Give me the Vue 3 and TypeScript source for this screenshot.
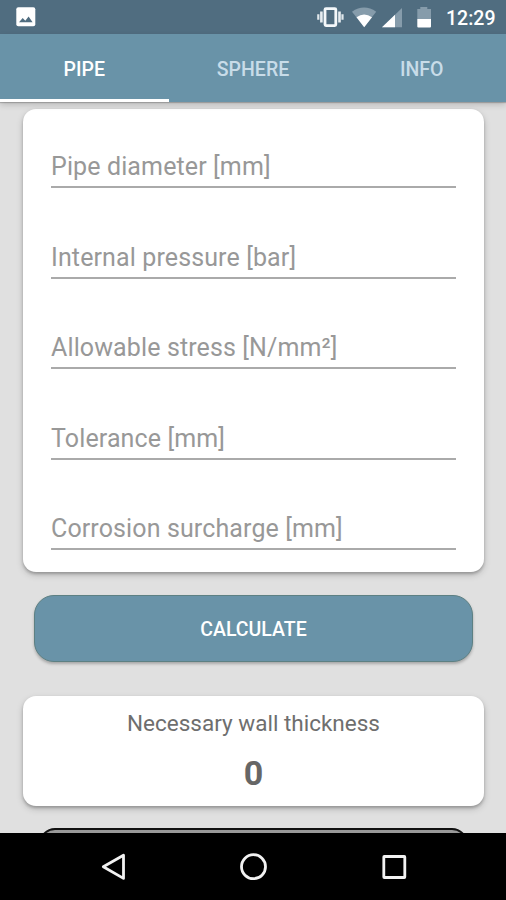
<script setup lang="ts">
import { ref } from 'vue'

interface Field {
  id: string
  label: string
}

const tabs: string[] = ['PIPE', 'SPHERE', 'INFO']
const activeTab = ref<string>('PIPE')

const fields: Field[] = [
  { id: 'diameter', label: 'Pipe diameter [mm]' },
  { id: 'pressure', label: 'Internal pressure [bar]' },
  { id: 'stress', label: 'Allowable stress [N/mm²]' },
  { id: 'tolerance', label: 'Tolerance [mm]' },
  { id: 'corrosion', label: 'Corrosion surcharge [mm]' },
]

const thickness = ref<number>(0)
</script>

<template>
  <div class="screen">
    <header class="status-bar">
      <svg class="picture-icon" width="20" height="20" viewBox="0 0 20 20">
        <rect x="0.3" y="0.2" width="19" height="19" rx="2" fill="#fff" />
        <path d="M3 15.3 6.7 11l2.6 2.7 3.300-4.300 4 5.900z" fill="#506d80" />
      </svg>
      <div class="status-icons">
        <svg width="130" height="34" viewBox="310 0 130 34">
          <rect x="325" y="8.600" width="10.800" height="17" rx="1" fill="none" stroke="#f4f8fa" stroke-width="2.800" />
          <path d="M321.400 11.500v11M339.500 11.500v11" stroke="#e6edf1" stroke-width="2.600" />
          <path d="M318.300 14.300v5.400M342.500 14.300v5.400" stroke="#e0e8ec" stroke-width="2.200" />
          <path d="M352 11.700Q364 3.300 376.200 11.700L364.200 27z" fill="#869cab" />
          <path d="M356.500 17.300Q364 11.700 372 17.300L364.200 27.200z" fill="#fff" />
          <path d="M402 8V27.300H382z" fill="#869cab" />
          <path d="M395 14.800V27.300H382z" fill="#fff" />
          <path d="M417.300 9h3V7h7v2h3.700v10h-13.700z" fill="#869cab" />
          <path d="M417.300 19H431v7.400q0 1-1 1h-11.700q-1 0-1-1z" fill="#fff" />
        </svg>
        <span class="clock">12:29</span>
      </div>
    </header>

    <nav class="tabs">
      <button
        v-for="tab in tabs"
        :key="tab"
        class="tab"
        :class="{ active: tab === activeTab }"
        @click="activeTab = tab"
      >
        {{ tab }}
      </button>
    </nav>

    <main class="content">
      <section class="card form">
        <div v-for="field in fields" :key="field.id" class="field">
          <span class="label">{{ field.label }}</span>
        </div>
      </section>

      <button class="calculate">CALCULATE</button>

      <section class="card result">
        <p class="caption">Necessary wall thickness</p>
        <p class="value">{{ thickness }}</p>
      </section>

      <div class="next-panel"></div>
    </main>

    <footer class="navigation">
      <svg width="506" height="67" viewBox="0 833 506 67" fill="none" stroke="#f2f2f2" stroke-width="2.800">
        <path d="M123.500 855.200V878.400L103.300 866.800z" stroke-linejoin="round" />
        <circle cx="253.500" cy="866.700" r="12" />
        <rect x="383.800" y="856.500" width="21" height="21" rx="0.500" />
      </svg>
    </footer>
  </div>
</template>

<style>
body {
  margin: 0;
}
</style>

<style scoped>
.screen {
  display: flex;
  flex-direction: column;
  width: 506px;
  height: 900px;
  overflow: hidden;
  background: #e0e0e0;
  font-family: Roboto, 'Liberation Sans', sans-serif;
}

.status-bar {
  display: flex;
  flex: none;
  align-items: center;
  justify-content: space-between;
  box-sizing: border-box;
  height: 34px;
  padding: 0 11px 0 16px;
  background: #506d80;
}

.status-icons {
  display: flex;
  align-items: center;
  gap: 6px;
}

.clock {
  width: 49px;
  padding-top: 3px;
  color: #fff;
  font-size: 19.5px;
  font-weight: 500;
  line-height: 24px;
  white-space: nowrap;
}

.tabs {
  z-index: 1;
  display: grid;
  flex: none;
  grid-template-columns: repeat(3, 1fr);
  height: 68px;
  background: #6993a8;
  box-shadow: 0 1px 1px rgba(0, 0, 0, 0.2), 0 3px 6px rgba(0, 0, 0, 0.16);
}

.tab {
  padding: 6px 0 0;
  border: 0;
  border-bottom: 3px solid transparent;
  background: none;
  color: #c8dce8;
  font: 500 19.5px Roboto, sans-serif;
}

.tab.active {
  border-bottom-color: #fff;
  color: #fff;
}

.content {
  display: flex;
  flex: 1;
  flex-direction: column;
  min-height: 0;
  overflow: hidden;
  padding: 7px 22px 0 23px;
}

.card {
  flex: none;
  border-radius: 13px;
  background: #fff;
  box-shadow: 0 2px 3px rgba(0, 0, 0, 0.22), 0 3px 7px rgba(0, 0, 0, 0.18);
}

.form {
  box-sizing: border-box;
  height: 463px;
  padding: 0 28px;
}

.field {
  display: flex;
  align-items: flex-end;
  box-sizing: border-box;
  height: 90.4px;
  padding-bottom: 5px;
  background: linear-gradient(#aaa, #aaa) bottom / 100% 2px no-repeat;
}

.field:first-child {
  height: 79.4px;
}

.label {
  color: #989898;
  font-size: 25px;
  letter-spacing: 0.12px;
  line-height: 32px;
  white-space: nowrap;
}

.calculate {
  flex: none;
  height: 67px;
  margin: 23px 11px 0;
  padding: 1px 0 0;
  border: 1px solid #5d8083;
  border-radius: 20px;
  background: #6993a8;
  box-shadow: 0 2px 3px rgba(0, 0, 0, 0.25);
  color: #fff;
  font: 500 19.5px Roboto, sans-serif;
}

.result {
  box-sizing: border-box;
  height: 110px;
  margin-top: 34px;
  padding-top: 11px;
  text-align: center;
}

.caption {
  margin: 0;
  color: #6e6e6e;
  font-size: 22.5px;
  line-height: 32px;
}

.value {
  margin: 14px 0 0;
  color: #666;
  font-size: 34px;
  font-weight: 700;
  line-height: 40px;
}

.next-panel {
  flex: none;
  height: 60px;
  margin: 22px 16px 0;
  border: 2px solid #111;
  border-radius: 16px;
  background: #999;
}

.navigation {
  z-index: 1;
  flex: none;
  height: 67px;
  background: #000;
}
</style>
